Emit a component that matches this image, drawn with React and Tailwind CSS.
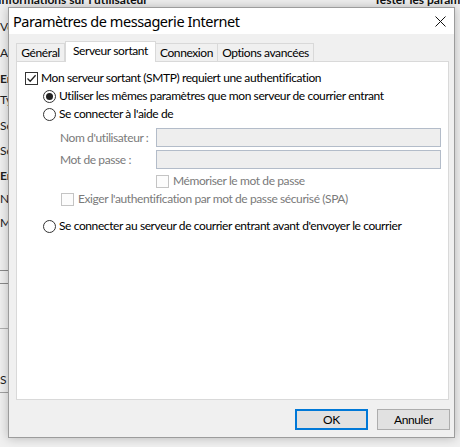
import React from "react";

function CheckBox({ checked, disabled }) {
  return (
    <div
      className={
        "w-[13px] h-[13px] shrink-0 border flex items-center justify-center " +
        (disabled ? "border-[#c4c4c4] bg-[#fcfcfc]" : "border-[#333333] bg-white")
      }
    >
      {checked && (
        <svg width="11" height="11" viewBox="0 0 11 11">
          <path d="M1.5 5.5 L4.2 8.2 L9.6 2.2" fill="none" stroke="#222" strokeWidth="1.3" />
        </svg>
      )}
    </div>
  );
}

function Radio({ checked }) {
  return (
    <div className="w-[13px] h-[13px] shrink-0 rounded-full border border-[#333333] bg-white flex items-center justify-center">
      {checked && <div className="w-[7px] h-[7px] rounded-full bg-[#222222]" />}
    </div>
  );
}

export default function App() {
  return (
    <div className="relative w-[460px] h-[447px] overflow-hidden bg-[#f0f0f0] font-['Lato',sans-serif] text-[12px] tracking-[-0.4px] text-black leading-none whitespace-nowrap">
      {/* Background window (behind the dialog) */}
      <div className="flex flex-col">
        <div className="h-[8px] overflow-hidden">
          <div className="flex justify-between -mt-[8px] -ml-[2px] font-bold text-[12px] leading-[16px] tracking-normal text-[#111]">
            <span>Informations sur l'utilisateur</span>
            <span className="w-[86px] overflow-hidden">Tester les paramètres</span>
          </div>
        </div>
        <div className="flex flex-col w-[8px] overflow-hidden text-[12px] leading-[16px] tracking-normal text-[#222] pt-[11px]">
          <div className="h-[26px]">Votre nom :</div>
          <div className="h-[26px]">Adresse de messagerie :</div>
          <div className="h-[21px] font-bold">Entrées du serveur</div>
          <div className="h-[26px]">Type de compte :</div>
          <div className="h-[25px]">Serveur entrant :</div>
          <div className="h-[25px]">Serveur sortant :</div>
          <div className="h-[23px] font-bold">Entrées de connexion</div>
          <div className="h-[24px]">Nom d'utilisateur :</div>
          <div className="h-[39px]">Mot de passe :</div>
          <div className="mt-[16px] h-[1px] bg-[#8a8a8a]" />
          <div className="mt-[12px] h-[1px] bg-[#8a8a8a]" />
          <div className="mt-[44px] h-[1px] bg-[#b0b0b0]" />
          <div className="mt-[43px] h-[16px]">S</div>
          <div className="mt-[4px] h-[1px] bg-[#a0a0a0]" />
        </div>
      </div>

      {/* Dialog */}
      <div className="absolute left-[8px] top-[7px] w-[447px] h-[431px] border border-[#9c9c9c] bg-[#f0f0f0] shadow-[0_0_10px_rgba(0,0,0,0.25)] flex flex-col">
        <div className="h-[26px] bg-white flex items-center justify-between pl-[4px] pr-[8px]">
          <span className="font-['Noto_Sans',sans-serif] text-[14.5px] tracking-[-0.45px] text-black">Paramètres de messagerie Internet</span>
          <svg width="11" height="11" viewBox="0 0 11 11">
            <path d="M0.5 0.5 L10.5 10.5 M10.5 0.5 L0.5 10.5" stroke="#111" strokeWidth="1" />
          </svg>
        </div>

        <div className="flex flex-col pl-[7px] pt-[7px]">
          {/* Tabs */}
          <div className="flex items-end h-[20px] relative z-10">
            <div className="w-[49px] h-[18px] border border-b-0 border-[#d9d9d9] bg-[#f0f0f0] flex items-center justify-center">Général</div>
            <div className="w-[91px] h-[21px] -mb-[1px] border border-b-0 border-[#d9d9d9] bg-white flex items-center justify-center pb-[2px]">Serveur sortant</div>
            <div className="w-[62px] h-[18px] border border-b-0 border-l-0 border-[#d9d9d9] bg-[#f0f0f0] flex items-center justify-center">Connexion</div>
            <div className="w-[96px] h-[18px] border border-b-0 border-l-0 border-[#d9d9d9] bg-[#f0f0f0] flex items-center justify-center">Options avancées</div>
          </div>

          {/* Panel */}
          <div className="w-[433px] h-[339px] border border-[#d9d9d9] bg-white flex flex-col pt-[7px]">
            <div className="h-[18px] flex items-center pl-[8px] gap-[3px]">
              <CheckBox checked />
              <span>Mon serveur sortant (SMTP) requiert une authentification</span>
            </div>
            <div className="h-[18px] flex items-center pl-[26px] gap-[3px]">
              <Radio checked />
              <span>Utiliser les mêmes paramètres que mon serveur de courrier entrant</span>
            </div>
            <div className="h-[18px] flex items-center pl-[26px] gap-[3px]">
              <Radio />
              <span>Se connecter à l'aide de</span>
            </div>
            <div className="h-[19px] mt-[5px] flex items-center pl-[43px]">
              <span className="w-[96px] text-[#7a7a7a]">Nom d'utilisateur :</span>
              <div className="w-[285px] h-[19px] border border-[#b3bcc9] bg-[#eeeeee]" />
            </div>
            <div className="h-[19px] mt-[3px] flex items-center pl-[43px]">
              <span className="w-[96px] text-[#7a7a7a]">Mot de passe :</span>
              <div className="w-[285px] h-[19px] border border-[#b3bcc9] bg-[#eeeeee]" />
            </div>
            <div className="h-[14px] mt-[5px] flex items-center pl-[139px] gap-[4px]">
              <CheckBox disabled />
              <span className="text-[#7a7a7a]">Mémoriser le mot de passe</span>
            </div>
            <div className="h-[14px] mt-[4px] flex items-center pl-[44px] gap-[4px]">
              <CheckBox disabled />
              <span className="text-[#7a7a7a]">Exiger l'authentification par mot de passe sécurisé (SPA)</span>
            </div>
            <div className="h-[14px] mt-[13px] flex items-center pl-[26px] gap-[3px]">
              <Radio />
              <span>Se connecter au serveur de courrier entrant avant d'envoyer le courrier</span>
            </div>
          </div>

          {/* Buttons */}
          <div className="flex justify-end gap-[9px] mt-[9px] pr-[4px]">
            <button className="w-[73px] h-[21px] border-2 border-[#0078d7] bg-[#e1e1e1] text-[12px] text-black flex items-center justify-center">OK</button>
            <button className="w-[73px] h-[21px] border border-[#adadad] bg-[#e1e1e1] text-[12px] text-black flex items-center justify-center">Annuler</button>
          </div>
        </div>
      </div>
    </div>
  );
}
